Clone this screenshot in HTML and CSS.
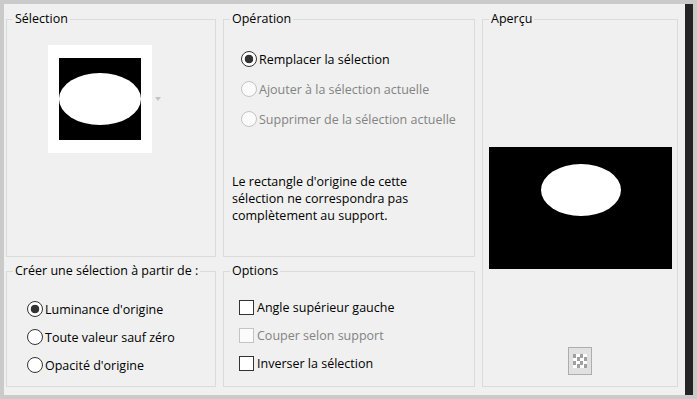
FILE: index.html
```html
<!DOCTYPE html>
<html lang="fr">
<head>
  <meta charset="UTF-8">
  <meta name="viewport" content="width=device-width, initial-scale=1.0">
  <link rel="stylesheet" href="styles.css">
  <title>Sélection à partir d'un masque</title>
</head>
<body>
  <div class="window">
    <div class="panel">
      <div class="layout">
        <fieldset class="group group-selection">
          <legend>Sélection</legend>
          <div class="thumb-row">
            <div class="thumb">
              <div class="thumb-black">
                <div class="thumb-ellipse"></div>
              </div>
            </div>
            <span class="drop-arrow"></span>
          </div>
        </fieldset>

        <fieldset class="group group-operation">
          <legend>Opération</legend>
          <div class="radio-list op-list">
            <label class="opt"><input type="radio" name="op" checked>Remplacer la sélection</label>
            <label class="opt disabled"><input type="radio" name="op" disabled>Ajouter à la sélection actuelle</label>
            <label class="opt disabled"><input type="radio" name="op" disabled>Supprimer de la sélection actuelle</label>
          </div>
          <p class="note">Le rectangle d'origine de cette<br>sélection ne correspondra pas<br>complètement au support.</p>
        </fieldset>

        <fieldset class="group group-preview">
          <legend>Aperçu</legend>
          <div class="preview">
            <div class="preview-ellipse"></div>
          </div>
          <button class="checker-button" type="button"><span class="checker"></span></button>
        </fieldset>

        <fieldset class="group group-source">
          <legend>Créer une sélection à partir de :</legend>
          <div class="radio-list source-list">
            <label class="opt"><input type="radio" name="src" checked>Luminance d'origine</label>
            <label class="opt"><input type="radio" name="src">Toute valeur sauf zéro</label>
            <label class="opt"><input type="radio" name="src">Opacité d'origine</label>
          </div>
        </fieldset>

        <fieldset class="group group-options">
          <legend>Options</legend>
          <div class="check-list">
            <label class="opt"><input type="checkbox">Angle supérieur gauche</label>
            <label class="opt disabled"><input type="checkbox" disabled>Couper selon support</label>
            <label class="opt"><input type="checkbox">Inverser la sélection</label>
          </div>
        </fieldset>
      </div>
    </div>
    <div class="scrollbar"></div>
  </div>
</body>
</html>
```

FILE: styles.css
```css
body {
  margin: 0;
  background-color: #cacaca;
  font-family: 'Open Sans', 'Noto Sans', sans-serif;
  font-size: 12.5px;
  color: #000;
}

.window {
  display: flex;
  box-sizing: border-box;
  width: 697px;
  height: 399px;
  padding: 4px;
}

.panel {
  flex: 1;
  background-color: #f0f0f0;
  padding: 7px 0 0 2px;
}

.scrollbar {
  width: 8px;
  background-color: #252525;
}

.layout {
  display: grid;
  grid-template-columns: 210px 252px 196px;
  grid-template-rows: 246px 124px;
  column-gap: 7px;
  row-gap: 6px;
}

.group {
  margin: 0;
  padding: 0;
  min-width: 0;
  border: 1px solid #dadada;
}

.group legend {
  margin-left: 6px;
  padding: 0 2px;
  line-height: 16px;
}

.group-preview {
  grid-column: 3;
  grid-row: 1 / span 2;
  display: flex;
  flex-direction: column;
  align-items: center;
}

/* Sélection */
.thumb-row {
  display: flex;
  align-items: center;
  padding-left: 41px;
  margin-top: 18px;
}

.thumb {
  width: 104px;
  height: 108px;
  background-color: #fff;
  display: flex;
  align-items: center;
  justify-content: center;
}

.thumb-black {
  width: 82px;
  height: 82px;
  background-color: #000;
  display: flex;
  align-items: center;
  justify-content: center;
}

.thumb-ellipse {
  width: 82px;
  height: 52px;
  border-radius: 50%;
  background-color: #fff;
}

.drop-arrow {
  margin-left: 3px;
  width: 0;
  height: 0;
  border-left: 3.5px solid transparent;
  border-right: 3.5px solid transparent;
  border-top: 4px solid #c4c4c4;
}

/* radios and checks */
.opt {
  display: flex;
  align-items: center;
  gap: 2px;
  white-space: nowrap;
}

.opt.disabled {
  color: #838383;
}

.opt input {
  appearance: none;
  margin: 0;
  flex: none;
  background-color: #fff;
  border: 1px solid #333;
}

.opt input[type="radio"] {
  width: 16px;
  height: 16px;
  border-radius: 50%;
}

.opt input[type="radio"]:checked {
  background: radial-gradient(circle, #333 0 4px, #fff 4.6px);
}

.opt input[type="checkbox"] {
  width: 15px;
  height: 15px;
  margin-right: 1px;
}

.opt input:disabled {
  border-color: #c4c4c4;
  background-color: #fbfbfb;
}

.op-list {
  padding: 17px 0 0 17px;
}

.op-list .opt {
  height: 30px;
}

.source-list {
  padding: 16px 0 0 20px;
}

.source-list .opt {
  height: 28px;
}

.check-list {
  padding: 14px 0 0 15px;
}

.check-list .opt {
  height: 28px;
}

.note {
  margin: 39px 0 0 8px;
  line-height: 17px;
  white-space: nowrap;
}

/* Aperçu */
.preview {
  margin-top: 120px;
  width: 183px;
  height: 122px;
  background-color: #000;
  display: flex;
  justify-content: center;
  padding: 17px 0 0 2px;
  box-sizing: border-box;
}

.preview-ellipse {
  width: 80px;
  height: 52px;
  border-radius: 50%;
  background-color: #fff;
}

.checker-button {
  margin-top: 78px;
  width: 24px;
  height: 28px;
  padding: 0;
  border: 1px solid #adadad;
  background-color: #e1e1e1;
  display: flex;
  align-items: center;
  justify-content: center;
}

.checker {
  width: 14px;
  height: 14px;
  background: conic-gradient(#fff 25%, #a0a0a0 0 50%, #fff 0 75%, #a0a0a0 0);
  background-size: 7px 7px;
}
```
